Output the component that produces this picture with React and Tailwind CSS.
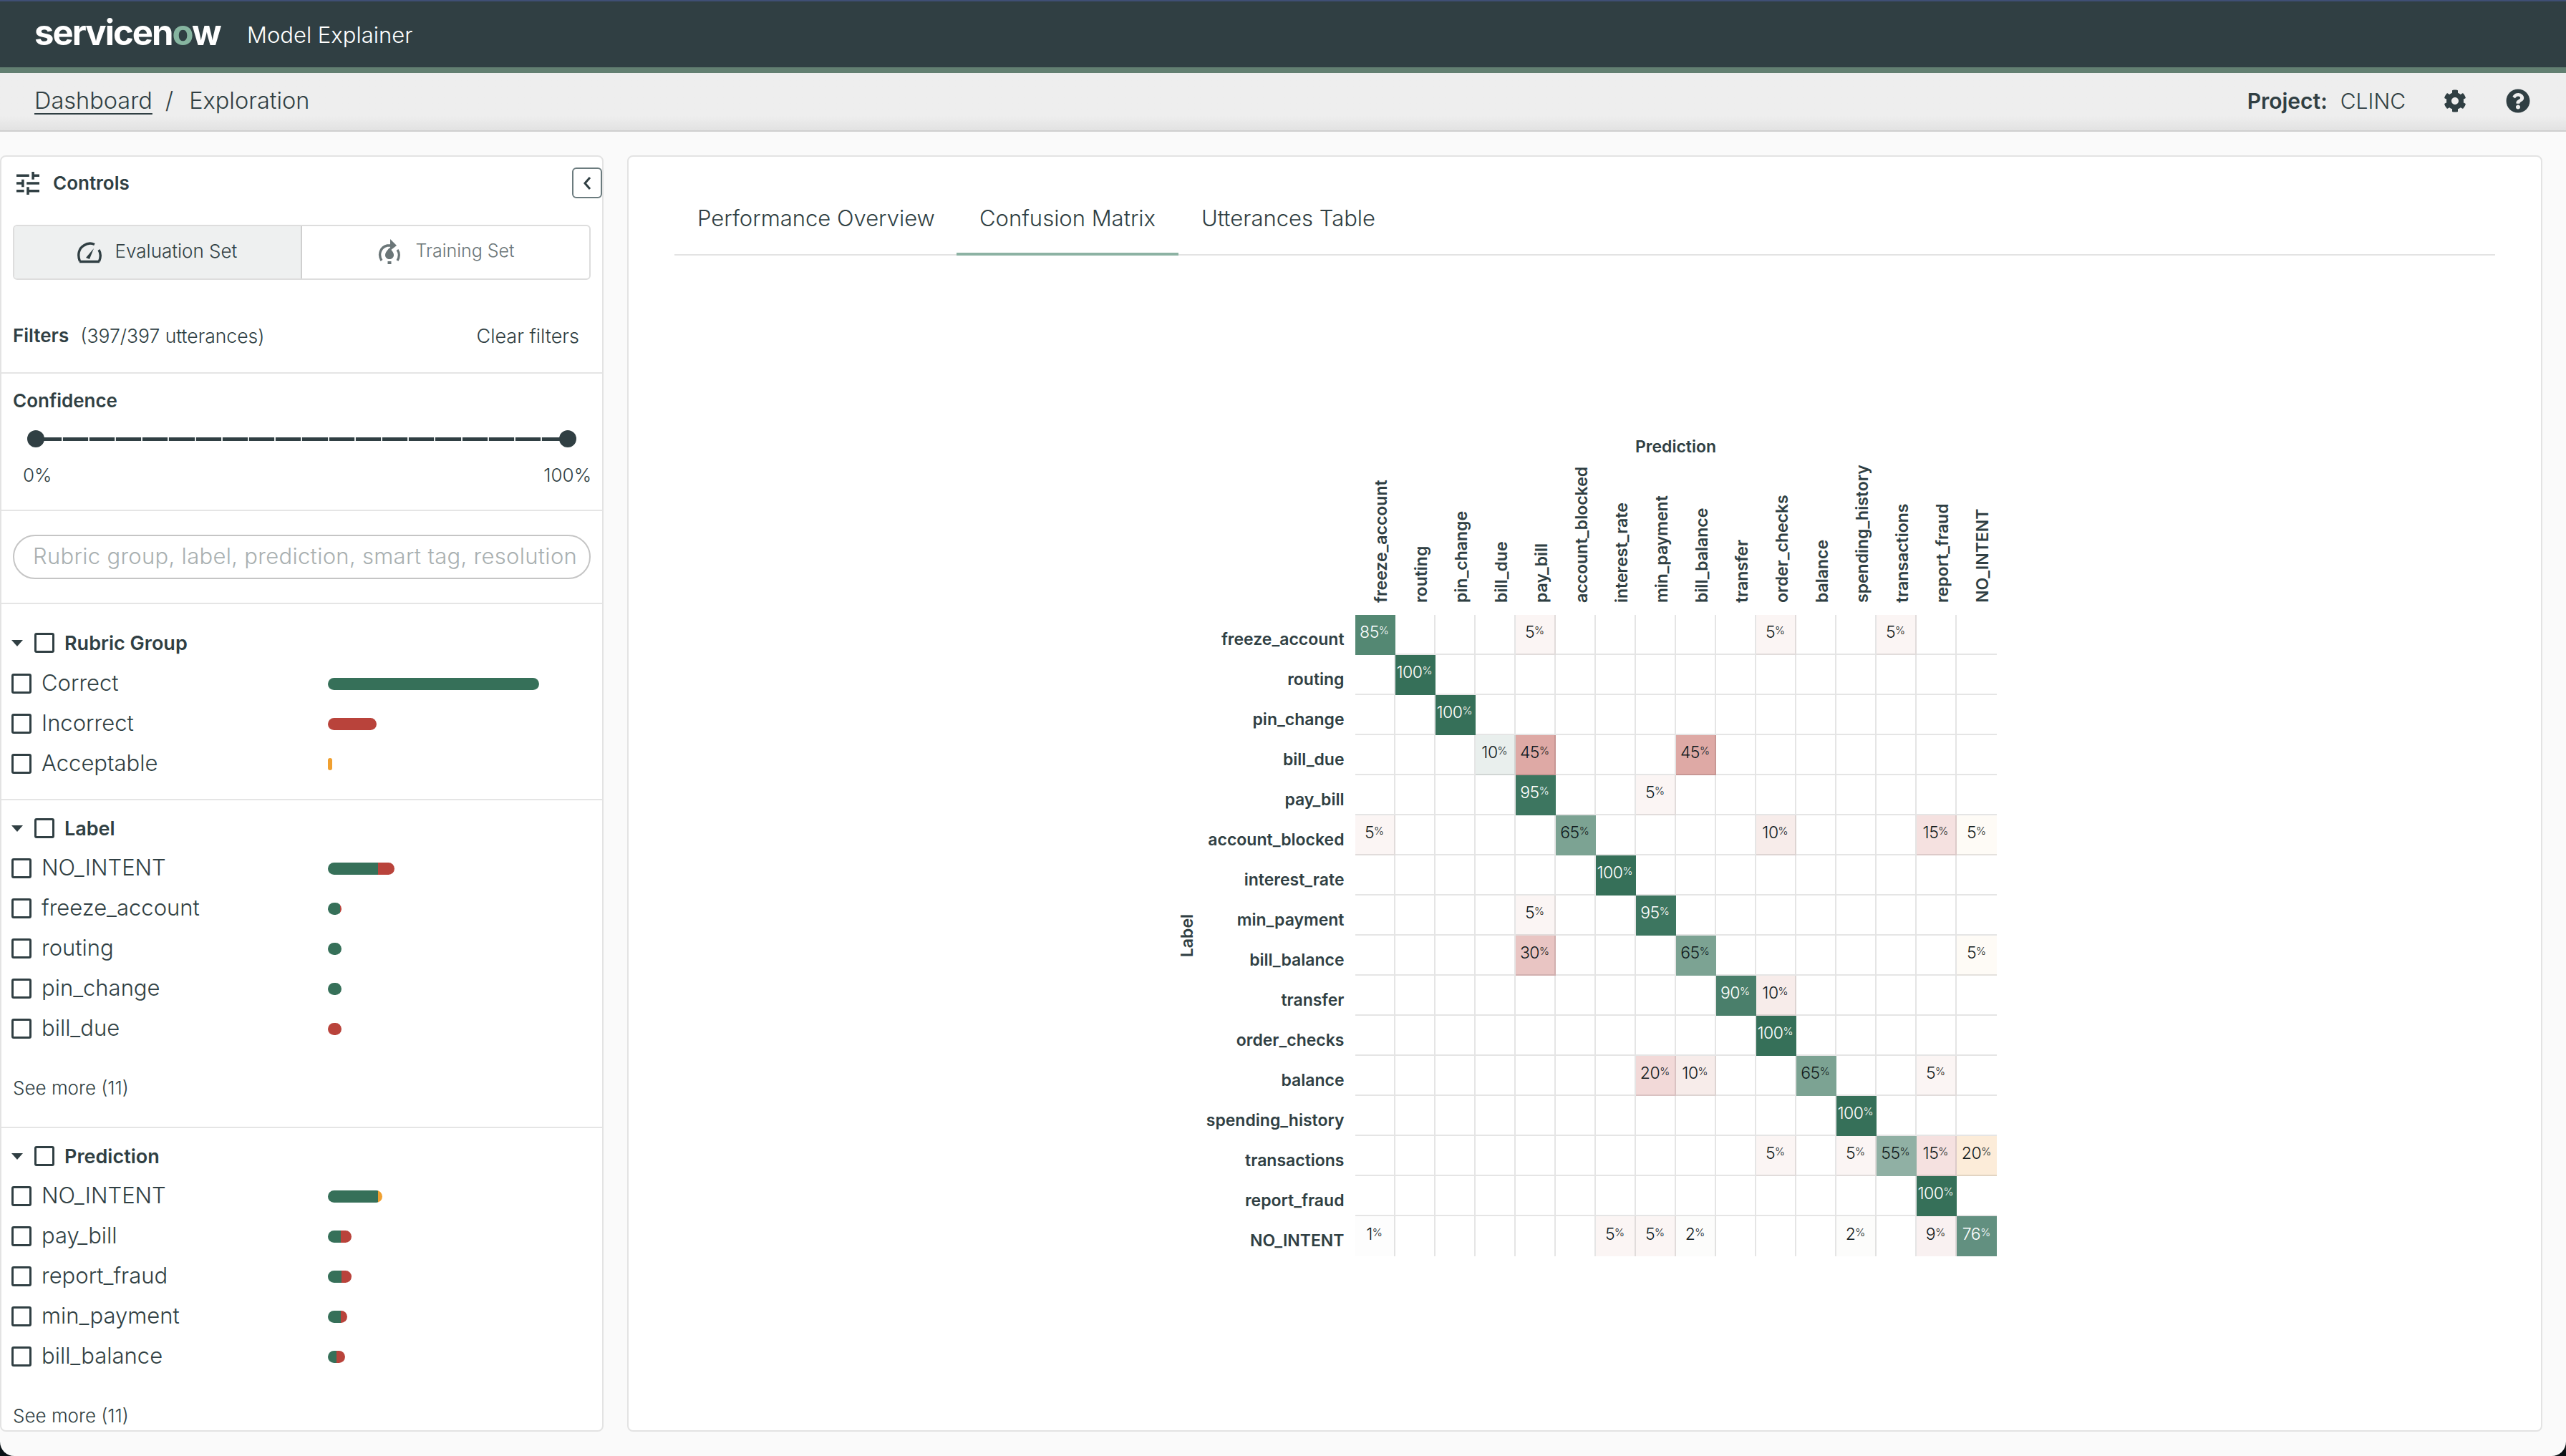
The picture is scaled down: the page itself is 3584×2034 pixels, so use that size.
import React from "react";
import { FaCog, FaQuestionCircle } from "react-icons/fa";

const COLS = ["freeze_account","routing","pin_change","bill_due","pay_bill","account_blocked","interest_rate","min_payment","bill_balance","transfer","order_checks","balance","spending_history","transactions","report_fraud","NO_INTENT"];

const S = {
  100: "bg-[#367059] text-white border-transparent",
  95: "bg-[#3d7660] text-white border-transparent",
  90: "bg-[#4a7f6b] text-white border-transparent",
  85: "bg-[#548873] text-white border-transparent",
  76: "bg-[#629080] text-white border-transparent",
  65: "bg-[#7ca393] text-[#111a1c] border-transparent",
  55: "bg-[#90b0a4] text-[#111a1c] border-transparent",
  g10: "bg-[#e9efed] text-[#111a1c] border-black/10",
  45: "bg-[#dea9a5] text-[#111a1c] border-black/10",
  30: "bg-[#e9c5c3] text-[#111a1c] border-black/10",
  20: "bg-[#f2d9d8] text-[#111a1c] border-black/10",
  15: "bg-[#f5e1e0] text-[#111a1c] border-black/10",
  10: "bg-[#f7ecea] text-[#111a1c] border-black/10",
  9: "bg-[#f9f1f1] text-[#111a1c] border-black/10",
  5: "bg-[#fbf5f4] text-[#111a1c] border-black/10",
  a5: "bg-[#fefbf6] text-[#111a1c] border-black/10",
  a20: "bg-[#fcecd9] text-[#111a1c] border-black/10",
  2: "bg-[#fcfcfb] text-[#111a1c] border-black/10",
  1: "bg-[#fdfdfd] text-[#111a1c] border-black/10",
};

// [column, shown value, colour key]
const ROWS = [
  [[0,85,85],[4,5,5],[10,5,5],[13,5,5]],
  [[1,100,100]],
  [[2,100,100]],
  [[3,10,"g10"],[4,45,45],[8,45,45]],
  [[4,95,95],[7,5,5]],
  [[0,5,5],[5,65,65],[10,10,10],[14,15,15],[15,5,"a5"]],
  [[6,100,100]],
  [[4,5,5],[7,95,95]],
  [[4,30,30],[8,65,65],[15,5,"a5"]],
  [[9,90,90],[10,10,10]],
  [[10,100,100]],
  [[7,20,20],[8,10,10],[11,65,65],[14,5,5]],
  [[12,100,100]],
  [[10,5,5],[12,5,5],[13,55,55],[14,15,15],[15,20,"a20"]],
  [[14,100,100]],
  [[0,1,1],[6,5,5],[7,5,5],[8,2,2],[12,2,2],[14,9,9],[15,76,76]],
];

const GREEN = "bg-[#367059]";
const RED = "bg-[#b9433b]";
const ORANGE = "bg-[#f0a030]";

const Check = () => <span className="block w-[28px] h-[28px] shrink-0 border-[3px] border-[#303f43] rounded-[3px]" />;

function Bar({ parts }) {
  return (
    <div className="flex h-[17px] rounded-full overflow-hidden">
      {parts.map(([w, c], i) => <div key={i} className={c} style={{ width: w }} />)}
    </div>
  );
}

function Item({ label, parts }) {
  return (
    <div className="flex items-center h-[56px] pl-[14px]">
      <div className="w-[442px] flex items-center gap-[14px] shrink-0">
        <Check />
        <span className="text-[31px] font-light leading-none -mt-[3px]">{label}</span>
      </div>
      <Bar parts={parts} />
    </div>
  );
}

function GroupHead({ title }) {
  return (
    <div className="flex items-center h-[56px] pl-[12px]">
      <svg width="20" height="12" viewBox="0 0 20 12" className="mt-[2px] shrink-0"><polygon points="2,1 18,1 10,10" fill="#303f43" /></svg>
      <span className="ml-[14px]"><Check /></span>
      <span className="ml-[14px] text-[27px] font-semibold leading-none">{title}</span>
    </div>
  );
}

function Group({ title, items, more, tall }) {
  return (
    <div className={tall ? "pt-[26px] pb-[21px] border-b-2 border-[#e5e5e5]" : more === "last" ? "pt-[11px]" : "pt-[11px] border-b-2 border-[#e5e5e5]"}>
      <GroupHead title={title} />
      {tall && <div className="h-[1px]" />}
      {items.map(([l, p]) => <Item key={l} label={l} parts={p} />)}
      {more && <div className="mt-[37px] mb-[36px] pl-[16px] h-[36px] text-[26px] font-light leading-[36px]">See more (11)</div>}
    </div>
  );
}

function Cell({ c }) {
  const last = c.col === 15;
  const lastRow = c.row === 15;
  const style = c.k !== undefined ? S[c.k] : "border-black/10";
  return (
    <div className={`h-[56px] flex items-center justify-center pb-[6px] text-[23px] font-light leading-none tracking-[-0.5px] ${style} ${last ? "" : "border-r-2"} ${lastRow ? "" : "border-b-2"}`}>
      {c.v !== undefined && <span className="flex items-start">{c.v}<span className="text-[15px] leading-none mt-[1px] tracking-normal">%</span></span>}
    </div>
  );
}

function Matrix() {
  const cells = [];
  ROWS.forEach((r, ri) => {
    for (let ci = 0; ci < 16; ci++) {
      const f = r.find((x) => x[0] === ci);
      cells.push({ row: ri, col: ci, v: f ? f[1] : undefined, k: f ? f[2] : undefined });
    }
  });
  return (
    <div className="grid grid-cols-[38px_216px_repeat(16,56px)] grid-rows-[32px_218px_repeat(16,56px)]">
      <div className="col-start-3 col-span-16 text-center text-[23px] font-semibold leading-[30px]">Prediction</div>
      <div className="col-start-1 col-span-2" />
      {COLS.map((c) => (
        <div key={c} className="flex justify-center items-start pl-[17px] pb-[17px]">
          <span className="[writing-mode:vertical-rl] rotate-180 text-[23px] font-semibold leading-[28px] whitespace-nowrap h-full">{c}</span>
        </div>
      ))}
      <div className="row-start-3 row-span-16 col-start-1 flex items-center justify-center">
        <span className="[writing-mode:vertical-rl] rotate-180 text-[23px] font-semibold leading-[28px]">Label</span>
      </div>
      {COLS.map((c, i) => (
        <React.Fragment key={c}>
          <div className="col-start-2 flex items-center justify-end pr-[15px] pt-[12px] text-[23px] font-semibold leading-none">{c}</div>
          {cells.filter((x) => x.row === i).map((x) => <Cell key={x.col} c={x} />)}
        </React.Fragment>
      ))}
    </div>
  );
}

const Ticks = Array.from({ length: 19 }, (_, i) => i);

function Sidebar() {
  return (
    <aside className="w-[843px] shrink-0 bg-white border-2 border-[#e3e3e3] rounded-lg overflow-hidden">
      <div className="h-[303px] border-b-2 border-[#e5e5e5] pt-[15px]">
        <div className="flex items-center h-[43px] pl-[21px]">
          <svg width="32" height="32" viewBox="3 3 18 18" fill="#303f43"><path d="M3 17v2h6v-2H3zM3 5v2h10V5H3zm10 16v-2h8v-2h-8v-2h-2v6h2zM7 9v2H3v2h4v2h2V9H7zm14 4v-2H11v2h10zm-6-4h2V7h4V5h-4V3h-2v6z" /></svg>
          <span className="ml-[19px] text-[26px] font-semibold leading-none">Controls</span>
          <button className="ml-auto w-[42px] h-[43px] rounded-[6px] border-2 border-[#6b7b7e] flex items-center justify-center">
            <svg width="16" height="22" viewBox="0 0 16 22" fill="none" stroke="#303f43" strokeWidth="3"><path d="M12 3 L5 11 L12 19" /></svg>
          </button>
        </div>
        <div className="mx-[16px] mt-[37px] h-[77px] flex border-2 border-[#dddddd] rounded-[6px] overflow-hidden text-[25px] font-light">
          <div className="w-[402px] bg-[#eef0f0] border-r-2 border-[#cfcfcf] flex items-center justify-center gap-[18px] pr-[2px] text-[26px]">
            <svg width="36" height="30" viewBox="0 0 36 30" fill="none" stroke="#303f43" strokeWidth="3.4">
              <path d="M4.5 27 C1 18 3 9 10 5 C15 1.5 21 1.5 25 3.5" />
              <path d="M31.5 27 C34 21 33.5 15 31 11" />
              <path d="M4 27.5 H32" />
              <path d="M13 22 L24 9 L18 24 Z" fill="#303f43" stroke="none" />
            </svg>
            <span className="-mt-[4px]">Evaluation Set</span>
          </div>
          <div className="flex-1 flex items-center justify-center gap-[20px] pl-[2px] text-[#6b7678]">
            <svg width="32" height="44" viewBox="0 0 32 44" fill="none" stroke="#6b7678" strokeWidth="3.4">
              <path d="M5 33 C0 25 3 14 13 12 L20 12" />
              <path d="M27 33 C30 28 30 22 27 18" />
              <polygon points="17,3 26,12 17,19" fill="#6b7678" stroke="none" />
              <path d="M16 15 C20 20 22 22 22 25.5 C22 29 19 31 16 31 C13 31 10 29 10 25.5 C10 22 12 20 16 15 Z" fill="#6b7678" stroke="none" />
              <rect x="13.5" y="34" width="5" height="4" fill="#6b7678" stroke="none" />
            </svg>
            <span className="-mt-[4px]">Training Set</span>
          </div>
        </div>
        <div className="mt-[60px] h-[36px] px-[16px] flex items-center text-[26px] leading-none">
          <span className="font-semibold">Filters</span>
          <span className="ml-[16px] font-light text-[26.5px]">(397/397 utterances)</span>
          <span className="ml-auto mr-[16px] font-light text-[27px]">Clear filters</span>
        </div>
      </div>

      <div className="h-[192px] border-b-2 border-[#e5e5e5] pt-[20px] px-[16px]">
        <div className="text-[26px] font-semibold leading-[36px]">Confidence</div>
        <div className="relative mt-[23px] mx-[20px] h-[24px] flex items-center">
          <div className="w-[24px] h-[24px] rounded-full bg-[#303f43] shrink-0" />
          <div className="flex-1 h-[5px] bg-[#303f43] flex justify-around -mx-[12px] px-[18px]">
            {Ticks.map((t) => <span key={t} className="w-[2px] h-[5px] bg-[#e4e8e8]" />)}
          </div>
          <div className="w-[24px] h-[24px] rounded-full bg-[#303f43] shrink-0" />
        </div>
        <div className="mt-[21px] flex justify-between pl-[14px] -mr-[1px] text-[26px] font-light leading-[36px]">
          <span>0%</span>
          <span>100%</span>
        </div>
      </div>

      <div className="h-[130px] border-b-2 border-[#e5e5e5] pt-[33px] px-[16px]">
        <div className="h-[62px] rounded-full border-2 border-[#c5c5c5] flex items-center pl-[26px] pb-[2px] text-[31px] tracking-[0.3px] font-light text-[#a9b0b1] whitespace-nowrap overflow-hidden">
          Rubric group, label, prediction, smart tag, resolution
        </div>
      </div>

      <Group
        title="Rubric Group"
        tall
        items={[
          ["Correct", [[295, GREEN]]],
          ["Incorrect", [[68, RED]]],
          ["Acceptable", [[6, ORANGE]]],
        ]}
      />
      <Group
        title="Label"
        more
        items={[
          ["NO_INTENT", [[70, GREEN], [23, RED]]],
          ["freeze_account", [[17, GREEN], [2, RED]]],
          ["routing", [[19, GREEN]]],
          ["pin_change", [[19, GREEN]]],
          ["bill_due", [[19, RED]]],
        ]}
      />
      <Group
        title="Prediction"
        more="last"
        items={[
          ["NO_INTENT", [[70, GREEN], [6, ORANGE]]],
          ["pay_bill", [[18, GREEN], [15, RED]]],
          ["report_fraud", [[19, GREEN], [14, RED]]],
          ["min_payment", [[18, GREEN], [9, RED]]],
          ["bill_balance", [[12, GREEN], [12, RED]]],
        ]}
      />
    </aside>
  );
}

export default function App() {
  return (
    <div className="w-[3584px] h-[2034px] bg-[#0a1216] font-[Inter,sans-serif] text-[#303f43]">
      <div className="w-full h-full rounded-b-[20px] overflow-hidden bg-[#fafafa] flex flex-col">
        <header className="h-[102px] shrink-0 bg-[#303f43] border-t-2 border-t-[#3f4f75] border-b-8 border-b-[#627f71] flex items-center pl-[48px] text-white">
          <span className="w-[297px] text-[49px] font-bold leading-none tracking-[-2px] -mt-[6px]">servicen<span className="text-[#86b5a0]">o</span>w</span>
          <span className="text-[31px] font-light leading-none">Model Explainer</span>
        </header>
        <div className="h-[82px] shrink-0 bg-gradient-to-b from-[#eeeeee] from-75% to-[#e2e2e2] border-b-2 border-[#cfcfcf] flex items-center pl-[48px] pr-[50px] pb-[2px] text-[30px] font-light leading-none">
          <a className="text-[32.5px] underline underline-offset-[6px] decoration-2">Dashboard</a>
          <span className="text-[32.5px] ml-[18px] mr-[22px]">/</span>
          <span className="text-[32.5px]">Exploration</span>
          <span className="ml-auto font-semibold">Project:</span>
          <span className="ml-[18px]">CLINC</span>
          <FaCog className="ml-[53px] w-[32px] h-[32px]" />
          <FaQuestionCircle className="ml-[55px] w-[34px] h-[34px]" />
        </div>
        <main className="flex-1 min-h-0 flex gap-[33px] pt-[33px] pb-[34px] pr-[33px]">
          <Sidebar />
          <section className="flex-1 min-w-0 bg-white border-2 border-[#e3e3e3] rounded-lg px-[64px] pt-[70px]">
            <div className="flex h-[68px] border-b-2 border-[#e3e3e3] text-[31px] font-light leading-[32px]">
              <div className="h-[68px] px-[32px] w-[394px] whitespace-nowrap">Performance Overview</div>
              <div className="h-[68px] px-[32px] w-[310px] border-b-4 border-[#8cb2a3] whitespace-nowrap">Confusion Matrix</div>
              <div className="h-[68px] px-[32px] whitespace-nowrap">Utterances Table</div>
            </div>
            <div className="flex justify-center pt-[252px]">
              <Matrix />
            </div>
          </section>
        </main>
      </div>
    </div>
  );
}
